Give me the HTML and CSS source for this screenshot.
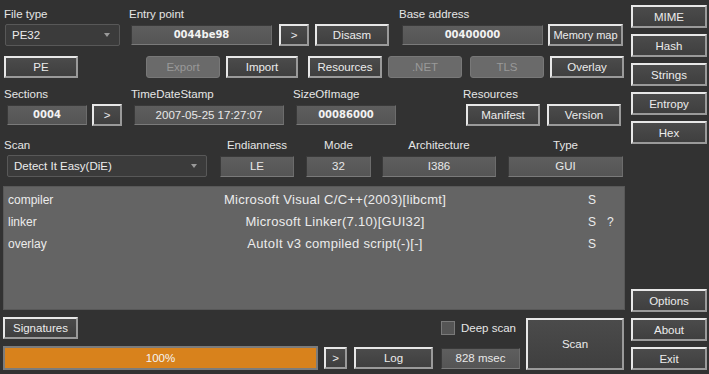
FILE: index.html
```html
<!DOCTYPE html>
<html lang="en">
<head>
    <meta charset="UTF-8">
    <meta name="viewport" content="width=device-width, initial-scale=1.0">
    <title>Detect It Easy</title>
    <link rel="stylesheet" href="styles.css">
</head>
<body>
    <div class="app">
        <div class="main">
            <div class="row row-top">
                <div class="group g-filetype">
                    <div class="label">File type</div>
                    <div class="controls">
                        <div class="combo w-filetype">PE32<span class="arrow"></span></div>
                    </div>
                </div>
                <div class="group g-entry">
                    <div class="label">Entry point</div>
                    <div class="controls">
                        <div class="field bold w-addr">0044be98</div>
                        <button class="btn w-go">&gt;</button>
                        <button class="btn w-disasm">Disasm</button>
                    </div>
                </div>
                <div class="group g-base">
                    <div class="label">Base address</div>
                    <div class="controls">
                        <div class="field bold w-base">00400000</div>
                        <button class="btn w-memmap">Memory map</button>
                    </div>
                </div>
            </div>

            <div class="row row-buttons">
                <button class="btn b-pe">PE</button>
                <button class="btn disabled b-export">Export</button>
                <button class="btn b-import">Import</button>
                <button class="btn b-resources">Resources</button>
                <button class="btn disabled b-net">.NET</button>
                <button class="btn disabled b-tls">TLS</button>
                <button class="btn b-overlay">Overlay</button>
            </div>

            <div class="row row-info">
                <div class="group g-sections">
                    <div class="label">Sections</div>
                    <div class="controls">
                        <div class="field bold w-sections">0004</div>
                        <button class="btn w-go2">&gt;</button>
                    </div>
                </div>
                <div class="group g-stamp">
                    <div class="label">TimeDateStamp</div>
                    <div class="controls">
                        <div class="field w-stamp">2007-05-25 17:27:07</div>
                    </div>
                </div>
                <div class="group g-size">
                    <div class="label">SizeOfImage</div>
                    <div class="controls">
                        <div class="field bold w-size">00086000</div>
                    </div>
                </div>
                <div class="group g-res">
                    <div class="label">Resources</div>
                    <div class="controls">
                        <button class="btn w-manifest">Manifest</button>
                        <button class="btn w-version">Version</button>
                    </div>
                </div>
            </div>

            <div class="row row-scan">
                <div class="group g-scan">
                    <div class="label">Scan</div>
                    <div class="controls">
                        <div class="combo w-scan">Detect It Easy(DiE)<span class="arrow"></span></div>
                    </div>
                </div>
                <div class="group g-endian centered">
                    <div class="label">Endianness</div>
                    <div class="controls">
                        <div class="field small w-endian">LE</div>
                    </div>
                </div>
                <div class="group g-mode centered">
                    <div class="label">Mode</div>
                    <div class="controls">
                        <div class="field small w-mode">32</div>
                    </div>
                </div>
                <div class="group g-arch centered">
                    <div class="label">Architecture</div>
                    <div class="controls">
                        <div class="field small w-arch">I386</div>
                    </div>
                </div>
                <div class="group g-type centered">
                    <div class="label">Type</div>
                    <div class="controls">
                        <div class="field small w-type">GUI</div>
                    </div>
                </div>
            </div>

            <div class="results">
                <div class="result-row">
                    <span>compiler</span>
                    <span class="value">Microsoft Visual C/C++(2003)[libcmt]</span>
                    <span></span>
                    <span>S</span>
                    <span></span>
                </div>
                <div class="result-row">
                    <span>linker</span>
                    <span class="value">Microsoft Linker(7.10)[GUI32]</span>
                    <span></span>
                    <span>S</span>
                    <span>?</span>
                </div>
                <div class="result-row">
                    <span>overlay</span>
                    <span class="value">AutoIt v3 compiled script(-)[-]</span>
                    <span></span>
                    <span>S</span>
                    <span></span>
                </div>
            </div>

            <div class="bottom">
                <div class="bottom-left">
                    <div class="bottom-top">
                        <button class="btn w-signatures">Signatures</button>
                        <label class="deep-scan"><span class="checkbox"></span>Deep scan</label>
                    </div>
                    <div class="bottom-bar">
                        <div class="progress"><div class="progress-fill" style="width: 100%;"></div><span>100%</span></div>
                        <button class="btn w-go3">&gt;</button>
                        <button class="btn w-log">Log</button>
                        <div class="field small w-time">828 msec</div>
                    </div>
                </div>
                <button class="btn scan-button">Scan</button>
            </div>
        </div>

        <div class="side">
            <div class="side-group">
                <button class="btn side-btn">MIME</button>
                <button class="btn side-btn">Hash</button>
                <button class="btn side-btn">Strings</button>
                <button class="btn side-btn">Entropy</button>
                <button class="btn side-btn">Hex</button>
            </div>
            <div class="side-group">
                <button class="btn side-btn">Options</button>
                <button class="btn side-btn">About</button>
                <button class="btn side-btn">Exit</button>
            </div>
        </div>
    </div>
</body>
</html>
```

FILE: styles.css
```css
body {
    margin: 0;
    padding: 0;
    background-color: #323232;
    font-family: "Liberation Sans", Arial, sans-serif;
    font-size: 11px;
    color: #e6e6e6;
}
.app {
    display: flex;
    width: 709px;
    height: 374px;
}
.main {
    width: 624px;
    padding-top: 5px;
}
.row {
    display: flex;
}
.group {
    display: flex;
    flex-direction: column;
}
.label {
    height: 19px;
    line-height: 19px;
    font-size: 11.5px;
    white-space: nowrap;
}
.centered .label {
    text-align: center;
}
.controls {
    display: flex;
    align-items: center;
    height: 22px;
}

/* buttons */
.btn {
    box-sizing: border-box;
    height: 22px;
    padding: 0;
    font-family: "Liberation Sans", Arial, sans-serif;
    font-size: 11.5px;
    color: #ececec;
    background: linear-gradient(#4b4b4b, #3f3f3f);
    border: 2px solid;
    border-color: #e8e8e8 #9a9a9a #9a9a9a #e8e8e8;
    white-space: nowrap;
}
.btn.disabled {
    background: #6a6a6a;
    border: 1px solid #787878;
    border-radius: 3px;
    color: #999;
}

/* read-only fields */
.field {
    box-sizing: border-box;
    height: 20px;
    line-height: 18px;
    text-align: center;
    font-size: 11.5px;
    background: linear-gradient(#5e5e5e, #555);
    border: 1px solid;
    border-color: #3a3a3a #6c6c6c #7a7a7a #3a3a3a;
    color: #e8e8e8;
    white-space: nowrap;
}
.field.bold {
    font-family: "DejaVu Sans", Verdana, sans-serif;
    font-size: 10px;
    font-weight: bold;
    color: #f2f2f2;
}
.field.small {
    height: 21px;
    line-height: 19px;
}

/* combo boxes */
.combo {
    box-sizing: border-box;
    position: relative;
    height: 22px;
    line-height: 20px;
    padding-left: 6px;
    font-size: 11.5px;
    background-color: #3b3b3b;
    border: 1px solid #585858;
    border-radius: 2px;
    color: #ececec;
}
.arrow {
    position: absolute;
    right: 9px;
    top: 8px;
    border-left: 3px solid transparent;
    border-right: 3px solid transparent;
    border-top: 4px solid #9a9a9a;
}

/* row 1 */
.g-filetype { margin-left: 4px; width: 117px; }
.w-filetype { margin-left: 1px; width: 115px; }
.g-entry { margin-left: 8px; }
.w-addr { margin-left: 2px; width: 141px; }
.w-go { margin-left: 7px; width: 30px; }
.w-disasm { margin-left: 6px; width: 74px; }
.g-base { margin-left: 10px; }
.w-base { margin-left: 3px; width: 141px; }
.w-memmap { margin-left: 5px; width: 75px; font-size: 11px; }

/* row 2 */
.row-buttons { margin-top: 10px; }
.b-pe { margin-left: 4px; width: 74px; }
.b-export { margin-left: 68px; width: 74px; }
.b-import { margin-left: 6px; width: 72px; }
.b-resources { margin-left: 10px; width: 74px; }
.b-net { margin-left: 6px; width: 74px; }
.b-tls { margin-left: 8px; width: 74px; }
.b-overlay { margin-left: 6px; width: 74px; }

/* row 3 */
.row-info { margin-top: 7px; }
.g-sections { margin-left: 4px; }
.w-sections { margin-left: 3px; width: 80px; }
.w-go2 { margin-left: 5px; width: 30px; }
.g-stamp { margin-left: 9px; }
.w-stamp { margin-left: 3px; width: 150px; }
.g-size { margin-left: 9px; }
.w-size { margin-left: 3px; width: 100px; }
.g-res { margin-left: 67px; }
.w-manifest { margin-left: 3px; width: 74px; }
.w-version { margin-left: 7px; width: 74px; }

/* row 4 */
.row-scan { margin-top: 10px; }
.g-scan { margin-left: 4px; }
.w-scan { margin-left: 3px; width: 200px; }
.g-endian { margin-left: 13px; width: 74px; }
.w-endian { width: 74px; }
.g-mode { margin-left: 12px; width: 65px; }
.w-mode { width: 65px; }
.g-arch { margin-left: 11px; width: 114px; }
.w-arch { width: 114px; }
.g-type { margin-left: 12px; width: 115px; }
.w-type { width: 115px; }

/* results */
.results {
    box-sizing: border-box;
    margin: 9px 0 0 3px;
    width: 622px;
    height: 124px;
    padding: 2px 0 0 4px;
    background-color: #646464;
    border: 1px solid #585858;
}
.result-row {
    display: grid;
    grid-template-columns: 130px 394px 56px 19px 1fr;
    height: 22px;
    line-height: 22px;
    font-size: 12px;
    color: #ececec;
}
.result-row .value {
    text-align: center;
    font-size: 13px;
    letter-spacing: 0.3px;
    white-space: nowrap;
}

/* bottom */
.bottom {
    display: flex;
    margin-top: 7px;
}
.bottom-left {
    width: 523px;
}
.bottom-top {
    display: flex;
    justify-content: space-between;
    align-items: center;
    height: 22px;
    padding-left: 3px;
    padding-right: 7px;
}
.w-signatures { width: 75px; }
.deep-scan {
    display: flex;
    align-items: center;
    gap: 6px;
    font-size: 11.5px;
}
.checkbox {
    box-sizing: border-box;
    width: 14px;
    height: 14px;
    background-color: #555;
    border: 1px solid #7a7a7a;
}
.bottom-bar {
    display: flex;
    align-items: center;
    margin-top: 7px;
    padding-left: 3px;
    height: 24px;
}
.progress {
    box-sizing: border-box;
    position: relative;
    width: 315px;
    height: 24px;
    background-color: #555;
    border: 2px solid #7c7c7c;
}
.progress-fill {
    height: 100%;
    background-color: #d8821c;
}
.progress span {
    position: absolute;
    left: 0;
    right: 0;
    top: 0;
    line-height: 20px;
    font-size: 11.5px;
    text-align: center;
    color: #f4f4f4;
}
.w-go3 { margin-left: 6px; width: 23px; }
.w-log { margin-left: 7px; width: 79px; }
.w-time { margin-left: 8px; width: 79px; height: 22px; line-height: 20px; }
.scan-button {
    margin: 1px 0 0 3px;
    width: 98px;
    height: 52px;
}

/* side column */
.side {
    display: flex;
    flex-direction: column;
    justify-content: space-between;
    width: 76px;
    margin-left: 7px;
    padding: 5px 0 4px;
}
.side-group {
    display: flex;
    flex-direction: column;
    gap: 6px;
}
.side-btn {
    width: 76px;
    height: 23px;
}
```
